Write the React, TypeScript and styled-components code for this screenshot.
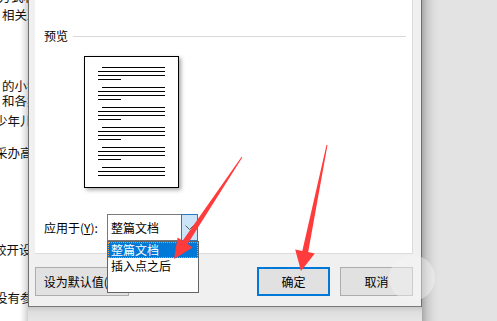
import styled, { createGlobalStyle } from "styled-components";

const GlobalStyle = createGlobalStyle`
  html, body {
    margin: 0;
    padding: 0;
    width: 497px;
    height: 321px;
    overflow: hidden;
    background: #e3e3e3;
  }
  * {
    box-sizing: border-box;
  }
`;

const cjk = `"Noto Sans CJK SC", "Liberation Sans", sans-serif`;

// background document text, cut by the dialog's left edge
const docLines = [
  { text: "的方式和", top: -10, shift: -14 },
  { text: "相关工作", top: 4, shift: 2 },
  { text: "的小学生", top: 57, shift: 2 },
  { text: "和各类活", top: 0.5, shift: 2 },
  { text: "少年儿童", top: 6.5, shift: -5 },
  { text: "采办高校", top: 18, shift: -5 },
  { text: "较开设课", top: 83, shift: -6 },
  { text: "没有参加", top: 34, shift: -5 },
];

const pageGroups = [4, 4, 4, 4, 4, 3];

function App() {
  return (
    <>
      <GlobalStyle />
      <Screen>
        <DocStrip>
          {docLines.map((l, i) => (
            <DocLine key={i} $top={l.top} $shift={l.shift}>
              {l.text}
            </DocLine>
          ))}
        </DocStrip>

        <DialogColumn>
          <Dialog>
            <Panel>
              <SectionHeader>
                <SectionLabel>预览</SectionLabel>
                <SectionRule />
              </SectionHeader>

              <PagePreview>
                {pageGroups.map((count, g) => (
                  <LineGroup key={g}>
                    {Array.from({ length: count }).map((_, i) => (
                      <TextLine
                        key={i}
                        $kind={i === 0 ? "indent" : i === 3 ? "short" : "full"}
                      />
                    ))}
                  </LineGroup>
                ))}
              </PagePreview>

              <ApplyRow>
                <ApplyLabel>
                  应用于(<u>Y</u>):
                </ApplyLabel>
                <Combo>
                  <ComboValue>整篇文档</ComboValue>
                  <ComboButton>
                    <svg width="9" height="5" viewBox="0 0 9 5">
                      <polyline
                        points="0.5,0.5 4.5,4.5 8.5,0.5"
                        fill="none"
                        stroke="#606060"
                        strokeWidth="1"
                      />
                    </svg>
                  </ComboButton>
                  <DropList>
                    <DropItem $selected>整篇文档</DropItem>
                    <DropItem>插入点之后</DropItem>
                  </DropList>
                </Combo>
              </ApplyRow>
            </Panel>

            <Footer>
              <Button $width={94}>
                设为默认值(<u>D</u>)
              </Button>
              <RightButtons>
                <Button $width={73} $primary>
                  确定
                </Button>
                <Button $width={73}>取消</Button>
              </RightButtons>
            </Footer>
          </Dialog>
          <BottomShadow />
        </DialogColumn>

        <RightArea />

        <Watermark />

        <Arrows width="497" height="321" viewBox="0 0 497 321">
          <polygon
            points="242.4,157.3 241.6,156.7 182.6,240.7 177.6,237.4 174,259 192.6,247.4 187.6,244.1"
            fill="#ff3b3b"
          />
          <polygon
            points="327.5,145.1 326.5,144.9 302.3,250.9 295.2,249.4 301,271 314.8,253.4 308.2,252.1"
            fill="#ff3b3b"
          />
        </Arrows>
      </Screen>
    </>
  );
}

const Screen = styled.div`
  position: relative;
  display: flex;
  width: 497px;
  height: 321px;
  overflow: hidden;
  font-family: ${cjk};
`;

const DocStrip = styled.div`
  width: 28px;
  flex-shrink: 0;
  height: 100%;
  overflow: hidden;
  background: linear-gradient(
    to right,
    #ffffff 0,
    #ffffff 20px,
    #e6e6e6 25px,
    #cfcfcf 28px
  );
`;

const DocLine = styled.div<{ $top: number; $shift: number }>`
  margin-top: ${(p) => p.$top}px;
  margin-left: ${(p) => p.$shift}px;
  height: 14px;
  font-size: 12.5px;
  line-height: 14px;
  color: #111;
  white-space: nowrap;
`;

const DialogColumn = styled.div`
  width: 394px;
  flex-shrink: 0;
  display: flex;
  flex-direction: column;
`;

const Dialog = styled.div`
  height: 307px;
  background: #f0f0f0;
  border-left: 1px solid #6e6e6e;
  border-right: 1px solid #6e6e6e;
  border-bottom: 1px solid #7a7a7a;
  display: flex;
  flex-direction: column;
`;

const Panel = styled.div`
  position: relative;
  height: 254px;
  margin-left: 6px;
  width: 378px;
  background: #ffffff;
  border-right: 1px solid #dcdcdc;
  border-bottom: 1px solid #dcdcdc;
  padding: 28px 6px 0 9px;
  display: flex;
  flex-direction: column;
`;

const SectionHeader = styled.div`
  display: flex;
  align-items: center;
  gap: 5px;
  height: 16px;
`;

const SectionLabel = styled.span`
  font-size: 12px;
  line-height: 16px;
  color: #000;
`;

const SectionRule = styled.div`
  flex: 1;
  height: 1px;
  background: #d9d9d9;
`;

const PagePreview = styled.div`
  margin-top: 12px;
  margin-left: 40px;
  width: 95px;
  height: 132px;
  background: #fff;
  border: 1px solid #000;
  box-shadow: 2px 2px 4px rgba(0, 0, 0, 0.35);
  padding: 10px 0 0 13px;
  display: flex;
  flex-direction: column;
  gap: 7px;
`;

const LineGroup = styled.div`
  display: flex;
  flex-direction: column;
  gap: 3px;
`;

const TextLine = styled.div<{ $kind: "indent" | "full" | "short" }>`
  height: 1px;
  background: #000;
  margin-left: ${(p) => (p.$kind === "indent" ? 4 : 0)}px;
  width: ${(p) => (p.$kind === "indent" ? 63 : p.$kind === "short" ? 23 : 67)}px;
`;

const ApplyRow = styled.div`
  margin-top: 26px;
  display: flex;
  align-items: center;
`;

const ApplyLabel = styled.span`
  width: 63px;
  font-size: 12px;
  color: #000;
  white-space: nowrap;
`;

const Combo = styled.div`
  position: relative;
  width: 91px;
  height: 27px;
  border: 1px solid #7a7a7a;
  background: #fff;
  display: flex;
  align-items: center;
`;

const ComboValue = styled.span`
  flex: 1;
  padding-left: 3px;
  font-size: 12px;
  color: #000;
`;

const ComboButton = styled.div`
  width: 17px;
  height: 27px;
  margin: -1px -1px -1px 0;
  background: #cce4f7;
  border: 1px solid #2f78b9;
  display: flex;
  align-items: center;
  justify-content: center;
`;

const DropList = styled.div`
  position: absolute;
  left: -1px;
  top: 26px;
  width: 92px;
  height: 52px;
  background: #fff;
  border: 1px solid #646464;
  z-index: 2;
`;

const DropItem = styled.div<{ $selected?: boolean }>`
  height: 16px;
  padding-left: 2px;
  font-size: 12px;
  line-height: 14px;
  white-space: nowrap;
  color: ${(p) => (p.$selected ? "#fff" : "#000")};
  background: ${(p) => (p.$selected ? "#0078d7" : "transparent")};
  border: 1px ${(p) => (p.$selected ? "dotted #f0a040" : "solid transparent")};
`;

const Footer = styled.div`
  flex: 1;
  display: flex;
  justify-content: space-between;
  padding: 13px 8px 0 6px;
`;

const RightButtons = styled.div`
  display: flex;
  gap: 10px;
`;

const Button = styled.div<{ $width: number; $primary?: boolean }>`
  width: ${(p) => p.$width}px;
  height: 29px;
  background: #e1e1e1;
  border: ${(p) => (p.$primary ? "2px solid #0078d7" : "1px solid #adadad")};
  font-size: 12px;
  color: #000;
  display: flex;
  align-items: center;
  justify-content: center;
  white-space: nowrap;
`;

const BottomShadow = styled.div`
  flex: 1;
  background: linear-gradient(to bottom, #c9c9c9 0, #dedede 5px, #e6e6e6 14px);
`;

const RightArea = styled.div`
  flex: 1;
  height: 100%;
  background: linear-gradient(
    to right,
    #a9a9a9 0,
    #c8c8c8 5px,
    #dcdcdc 11px,
    #e3e3e3 17px
  );
`;

const Watermark = styled.div`
  position: absolute;
  left: 389px;
  top: 255px;
  width: 46px;
  height: 46px;
  border-radius: 50%;
  background: rgba(245, 245, 245, 0.45);
  pointer-events: none;
`;

const Arrows = styled.svg`
  position: absolute;
  left: 0;
  top: 0;
  pointer-events: none;
  z-index: 5;
`;

export default App;
